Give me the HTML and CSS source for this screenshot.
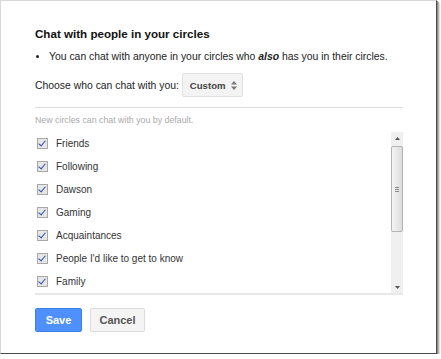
FILE: index.html
```html
<!DOCTYPE html>
<html lang="en">
<head>
	<meta charset="utf-8">
	<title>Chat settings</title>
	<link rel="stylesheet" href="styles.css">
</head>
<body>
	<div class="frame">
		<div class="dialog">
			<h2 class="title">Chat with people in your circles</h2>
			<ul class="notes">
				<li>You can chat with anyone in your circles who <b><i>also</i></b> has you in their circles.</li>
			</ul>
			<div class="choose">
				<span>Choose who can chat with you:</span>
				<span class="select">Custom
					<svg class="arrows" width="6" height="9" viewBox="0 0 6 9"><path d="M0 3.5 L3 0 L6 3.5 Z M0 5.5 L3 9 L6 5.5 Z" fill="#777"/></svg>
				</span>
			</div>
			<div class="rule"></div>
			<p class="hint">New circles can chat with you by default.</p>
			<div class="listbox">
				<div class="items">
					<div class="item"><span class="check"></span>Friends</div>
					<div class="item"><span class="check"></span>Following</div>
					<div class="item"><span class="check"></span>Dawson</div>
					<div class="item"><span class="check"></span>Gaming</div>
					<div class="item"><span class="check"></span>Acquaintances</div>
					<div class="item"><span class="check"></span>People I'd like to get to know</div>
					<div class="item"><span class="check"></span>Family</div>
				</div>
				<div class="scrollbar">
					<div class="sb-btn"><svg width="5" height="3" viewBox="0 0 5 3"><path d="M0 3 L2.5 0 L5 3 Z" fill="#555"/></svg></div>
					<div class="sb-track">
						<div class="sb-thumb"><span class="grip"></span></div>
					</div>
					<div class="sb-btn"><svg width="5" height="3" viewBox="0 0 5 3"><path d="M0 0 L2.5 3 L5 0 Z" fill="#555"/></svg></div>
				</div>
			</div>
			<div class="buttons">
				<button class="btn save">Save</button>
				<button class="btn cancel">Cancel</button>
			</div>
		</div>
	</div>
</body>
</html>
```

FILE: styles.css
```css
html, body {
	margin: 0;
	padding: 0;
	background: #ffffff;
}
.frame {
	width: 435px;
	height: 352px;
	border-top: 1px solid #d8d8d8;
	border-left: 1px solid #d8d8d8;
	border-right: 1px solid #4a4a4a;
	border-bottom: 1px solid #4a4a4a;
	box-shadow: 1px 1px 0 #8a8a8a, 2px 2px 0 #b8b8b8, 3px 3px 1px #dddddd;
	background: #ffffff;
	font-family: "Liberation Sans", Arial, sans-serif;
	color: #222222;
}
.dialog {
	padding: 26px 0 0 34px;
	width: 368px;
}
.title {
	margin: 0;
	font-size: 11.6px;
	font-weight: bold;
	line-height: 14px;
	color: #111;
}
.notes {
	margin: 9px 0 0 0;
	padding: 0 0 0 14px;
	font-size: 10.4px;
	line-height: 14px;
	white-space: nowrap;
}
.notes li {
	list-style: disc;
}
.choose {
	margin-top: 9px;
	display: flex;
	align-items: center;
	font-size: 10.4px;
}
.select {
	margin-left: 3px;
	display: inline-flex;
	align-items: center;
	gap: 5px;
	height: 22px;
	padding: 0 5px 0 7px;
	background: #f3f3f3;
	border: 1px solid #e0e0e0;
	border-radius: 2px;
	font-weight: bold;
	font-size: 9.6px;
	color: #444;
}
.rule {
	margin-top: 10px;
	border-top: 1px solid #dcdcdc;
}
.hint {
	margin: 6px 0 0 0;
	font-size: 8.8px;
	line-height: 12px;
	color: #aaaaaa;
}
.listbox {
	margin-top: 4px;
	display: flex;
	height: 163px;
	border-bottom: 2px solid #e8e8e8;
}
.items {
	flex: 1;
	padding-top: 2px;
}
.item {
	display: flex;
	align-items: center;
	height: 23px;
	font-size: 10px;
	color: #333;
}
.check {
	position: relative;
	width: 9px;
	height: 9px;
	margin: 0 8px 0 2px;
	border: 1px solid #a8a8a8;
	background: #e6e6e6;
}
.check::after {
	content: "";
	position: absolute;
	left: 2px;
	top: 0px;
	width: 3px;
	height: 6px;
	border-right: 1.5px solid #3050a8;
	border-bottom: 1.5px solid #3050a8;
	transform: rotate(40deg);
}
.scrollbar {
	width: 12px;
	margin-top: 2px;
	display: flex;
	flex-direction: column;
	background: #f0f0f0;
}
.sb-btn {
	height: 12px;
	display: flex;
	align-items: center;
	justify-content: center;
}
.sb-track {
	flex: 1;
}
.sb-thumb {
	margin-top: 2px;
	height: 84px;
	border: 1px solid #b4b4b4;
	border-radius: 2px;
	background: linear-gradient(to right, #f4f4f4, #dcdcdc);
	display: flex;
	align-items: center;
	justify-content: center;
}
.grip {
	width: 4px;
	height: 5px;
	background: repeating-linear-gradient(to bottom, #888 0 1px, transparent 1px 2px);
}
.buttons {
	margin-top: 13px;
	display: flex;
	gap: 8px;
}
.btn {
	height: 24px;
	border-radius: 2px;
	font-family: "Liberation Sans", Arial, sans-serif;
	font-size: 11px;
	font-weight: bold;
	padding: 0;
}
.save {
	width: 47px;
	background: #4d90fe;
	border: 1px solid #3f7fe8;
	color: #ffffff;
}
.cancel {
	width: 55px;
	background: #f4f4f4;
	border: 1px solid #dcdcdc;
	color: #555555;
}
```
